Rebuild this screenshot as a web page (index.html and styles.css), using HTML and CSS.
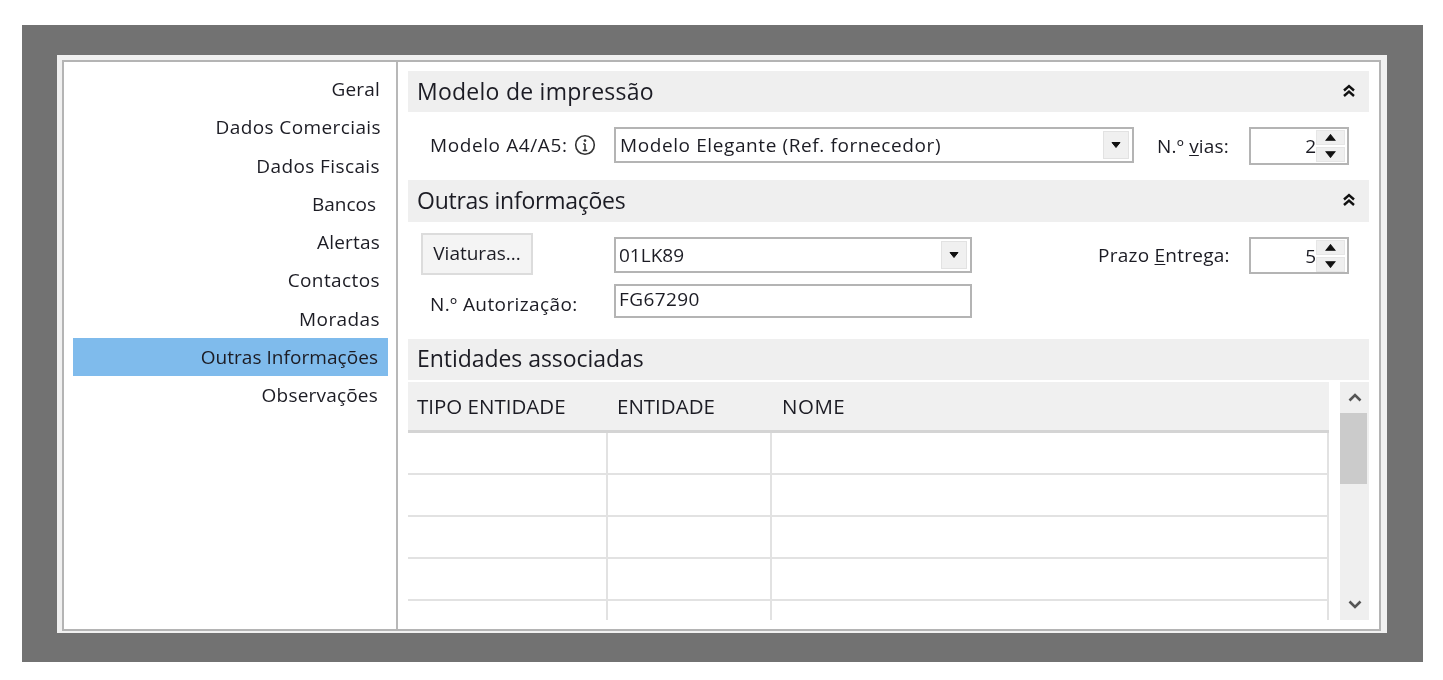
FILE: index.html
```html
<!DOCTYPE html>
<html lang="pt">
<head>
<meta charset="utf-8">
<title>Outras Informações</title>
<link rel="stylesheet" href="styles.css">
</head>
<body>
<div class="backdrop">
  <div class="frame">
    <div class="window">
      <nav class="sidebar">
        <div class="nav-item nav-tight">Geral</div>
        <div class="nav-item nav-wide">Dados Comerciais</div>
        <div class="nav-item">Dados Fiscais</div>
        <div class="nav-item nav-bancos">Bancos</div>
        <div class="nav-item nav-tight">Alertas</div>
        <div class="nav-item">Contactos</div>
        <div class="nav-item">Moradas</div>
        <div class="nav-item selected">Outras Informações</div>
        <div class="nav-item nav-obs">Observações</div>
      </nav>
      <main class="content">
        <div class="section-head">
          <span>Modelo de impressão</span>
          <svg class="collapse" viewBox="0 0 14 14"><path d="M2 6.500 7 2l5 4.500M2 12l5-4.500 5 4.500"/></svg>
        </div>
        <div class="row row-model">
          <div class="label label-info"><span>Modelo A4/A5:</span>
            <svg class="info" viewBox="0 0 22 22"><circle cx="11" cy="11" r="9.300"/><path d="M11 10v6.500M8.800 16.500h4.400M9.200 10H11"/><circle class="dot" cx="11" cy="6.600" r="1.300"/></svg>
          </div>
          <div class="combo combo-wide">
            <span>Modelo Elegante (Ref. fornecedor)</span>
            <span class="combo-btn"><svg viewBox="0 0 10 6"><path d="M1 .5h8L5 5.500z"/></svg></span>
          </div>
          <div class="label label-vias"><span>N.º <u>v</u>ias:</span></div>
          <div class="spin">
            <span class="spin-val">2</span>
            <span class="spin-btns">
              <span class="spin-btn"><svg viewBox="0 0 10 6"><path d="M1 5.500h8L5 .5z"/></svg></span>
              <span class="spin-btn"><svg viewBox="0 0 10 6"><path d="M1 .5h8L5 5.500z"/></svg></span>
            </span>
          </div>
        </div>
        <div class="section-head head-other">
          <span>Outras informações</span>
          <svg class="collapse" viewBox="0 0 14 14"><path d="M2 6.500 7 2l5 4.500M2 12l5-4.500 5 4.500"/></svg>
        </div>
        <div class="row row-vehicle">
          <div class="btn-cell"><div class="button">Viaturas...</div></div>
          <div class="combo combo-mid">
            <span>01LK89</span>
            <span class="combo-btn"><svg viewBox="0 0 10 6"><path d="M1 .5h8L5 5.500z"/></svg></span>
          </div>
          <div class="label label-prazo"><span>Prazo <u>E</u>ntrega:</span></div>
          <div class="spin spin-short">
            <span class="spin-val">5</span>
            <span class="spin-btns">
              <span class="spin-btn"><svg viewBox="0 0 10 6"><path d="M1 5.500h8L5 .5z"/></svg></span>
              <span class="spin-btn"><svg viewBox="0 0 10 6"><path d="M1 .5h8L5 5.500z"/></svg></span>
            </span>
          </div>
        </div>
        <div class="row row-auth">
          <div class="label label-auth"><span>N.º Autorização:</span></div>
          <div class="field">FG67290</div>
        </div>
        <div class="section-head head-ent"><span>Entidades associadas</span></div>
        <div class="grid-wrap">
          <div class="table">
            <div class="thead">
              <div class="th col-a">TIPO ENTIDADE</div>
              <div class="th col-b">ENTIDADE</div>
              <div class="th col-c">NOME</div>
            </div>
            <div class="tr"><div class="td col-a"></div><div class="td col-b"></div><div class="td col-c"></div></div>
            <div class="tr"><div class="td col-a"></div><div class="td col-b"></div><div class="td col-c"></div></div>
            <div class="tr"><div class="td col-a"></div><div class="td col-b"></div><div class="td col-c"></div></div>
            <div class="tr"><div class="td col-a"></div><div class="td col-b"></div><div class="td col-c"></div></div>
            <div class="tr tr-last"><div class="td col-a"></div><div class="td col-b"></div><div class="td col-c"></div></div>
          </div>
          <div class="scrollbar">
            <div class="scroll-arrow"><svg viewBox="0 0 14 9"><path d="M1.500 7.500 7 2l5.500 5.500"/></svg></div>
            <div class="thumb"></div>
            <div class="scroll-track"></div>
            <div class="scroll-arrow"><svg viewBox="0 0 14 9"><path d="M1.500 1.500 7 7l5.500-5.500"/></svg></div>
          </div>
        </div>
      </main>
    </div>
  </div>
</div>
</body>
</html>
```
FILE: styles.css
```css
* { box-sizing: border-box; }
html, body { height: 100%; }
body {
  margin: 0;
  padding: 25px 20px 18px 22px;
  background: #fff;
  font-family: "Open Sans", "Noto Sans", "Liberation Sans", sans-serif;
  color: #1c1c24;
  font-size: 19px;
  overflow: hidden;
}
.backdrop {
  height: 637px;
  padding: 30px 36px 29px 35px;
  background: #727272;
  filter: blur(.35px);
}
.frame {
  height: 100%;
  padding: 5px 6px 2px 5px;
  background: #f0f0f0;
}
.window {
  display: flex;
  height: 100%;
  background: #fff;
  border: 2px solid #b4b4b4;
}
.sidebar {
  flex: 0 0 334px;
  padding: 8px 8px 0 9px;
  border-right: 2px solid #b8b8b8;
}
.nav-item {
  height: 38.25px;
  line-height: 38px;
  text-align: right;
  padding-right: 8px;
  letter-spacing: .4px;
  white-space: nowrap;
}
.nav-tight { letter-spacing: .2px; }
.nav-wide { padding-right: 7px; }
.nav-bancos { padding-right: 12px; letter-spacing: 0; }
.nav-obs { padding-right: 10px; letter-spacing: .2px; }
.selected { background: #7fbbec; padding-right: 10px; letter-spacing: .05px; }
.content {
  flex: 1;
  min-width: 0;
  padding: 9px 10px 0 10px;
}
.section-head {
  display: flex;
  align-items: center;
  justify-content: space-between;
  height: 41px;
  padding: 0 13px 2px 9px;
  background: #efefef;
  font-size: 23px;
  letter-spacing: .25px;
}
.head-other { margin-top: 15px; height: 42px; letter-spacing: -.25px; }
.head-ent { margin-top: 21px; padding-bottom: 3px; letter-spacing: -.05px; }
.collapse { width: 14px; height: 14px; fill: none; stroke: #111; stroke-width: 2.400; }
.row { display: flex; align-items: flex-start; }
.row-model { height: 38px; margin-top: 15px; }
.row-vehicle { height: 42px; margin-top: 11px; }
.row-auth { height: 34px; margin-top: 9px; }
.label {
  flex: 0 0 206px;
  height: 36px;
  padding-left: 22px;
  display: flex;
  align-items: center;
  gap: 6px;
  white-space: nowrap;
  letter-spacing: .6px;
}
.label u { text-underline-offset: 2px; }
.info { width: 22px; height: 22px; fill: none; stroke: #333; stroke-width: 1.600; flex: none; }
.info .dot { fill: #333; stroke: none; }
.combo {
  display: flex;
  align-items: center;
  justify-content: space-between;
  height: 36px;
  padding: 0 3px 0 4px;
  border: 2px solid #b4b4b4;
  background: #fff;
  letter-spacing: .6px;
}
.combo-wide { flex: 0 0 520px; }
.combo-mid { flex: 0 0 358px; margin-top: 4px; letter-spacing: 0; padding-left: 3px; }
.combo-btn {
  display: flex;
  align-items: center;
  justify-content: center;
  width: 26px;
  height: 28px;
  background: #f0f0f0;
  border: 1px solid #e2e2e2;
}
.combo-btn svg { width: 10px; height: 6px; fill: #111; stroke: #111; }
.label-vias { flex: 0 0 115px; padding-left: 23px; height: 38px; letter-spacing: .2px; }
.label-prazo { flex: 0 0 277px; padding-left: 126px; margin-top: 4px; letter-spacing: .25px; }
.label-auth { height: 34px; padding-top: 5px; letter-spacing: .4px; }
.spin {
  display: flex;
  align-items: center;
  justify-content: flex-end;
  flex: 0 0 100px;
  height: 38px;
  padding: 0 2px 0 0;
  border: 2px solid #b4b4b4;
  background: #fff;
}
.spin-short { height: 37px; margin-top: 4px; }
.spin-btns { display: flex; flex-direction: column; gap: 2px; width: 29px; }
.spin-btn {
  display: flex;
  align-items: center;
  justify-content: center;
  height: 15px;
  background: #efefef;
  border: 1px solid #e6e6e6;
}
.spin-btn svg { width: 11px; height: 7px; fill: #111; stroke: #111; }
.btn-cell { flex: 0 0 206px; padding-left: 13px; }
.button {
  width: 112px;
  height: 42px;
  line-height: 37px;
  text-align: center;
  background: #f4f4f4;
  border: 2px solid #dcdcdc;
}
.field {
  flex: 0 0 358px;
  height: 34px;
  line-height: 27px;
  padding-left: 3px;
  border: 2px solid #b4b4b4;
  letter-spacing: .4px;
}
.grid-wrap { display: flex; justify-content: space-between; margin-top: 2px; height: 238px; }
.table { flex: 0 0 921px; overflow: hidden; }
.thead {
  display: flex;
  height: 51px;
  background: #f0f0f0;
  border-bottom: 3px solid #d4d4d4;
  font-size: 20.500px;
}
.th { line-height: 49px; padding-left: 9px; white-space: nowrap; }
.th.col-c { padding-left: 10px; letter-spacing: .5px; }
.col-a { flex: 0 0 200px; }
.col-b { flex: 0 0 164px; }
.col-c { flex: 1; }
.tr { display: flex; height: 42px; border-bottom: 2px solid #e2e2e2; }
.tr-last { border-bottom: 0; height: 20px; }
.td { border-right: 2px solid #e2e2e2; }
.scrollbar { flex: 0 0 29px; display: flex; flex-direction: column; background: #efefef; }
.scroll-arrow { flex: 0 0 31px; display: flex; align-items: center; justify-content: center; }
.scroll-arrow svg { width: 14px; height: 9px; fill: none; stroke: #555; stroke-width: 2.600; }
.thumb { flex: 0 0 71px; margin-right: 2px; background: #cbcbcb; }
.scroll-track { flex: 1; }
```
